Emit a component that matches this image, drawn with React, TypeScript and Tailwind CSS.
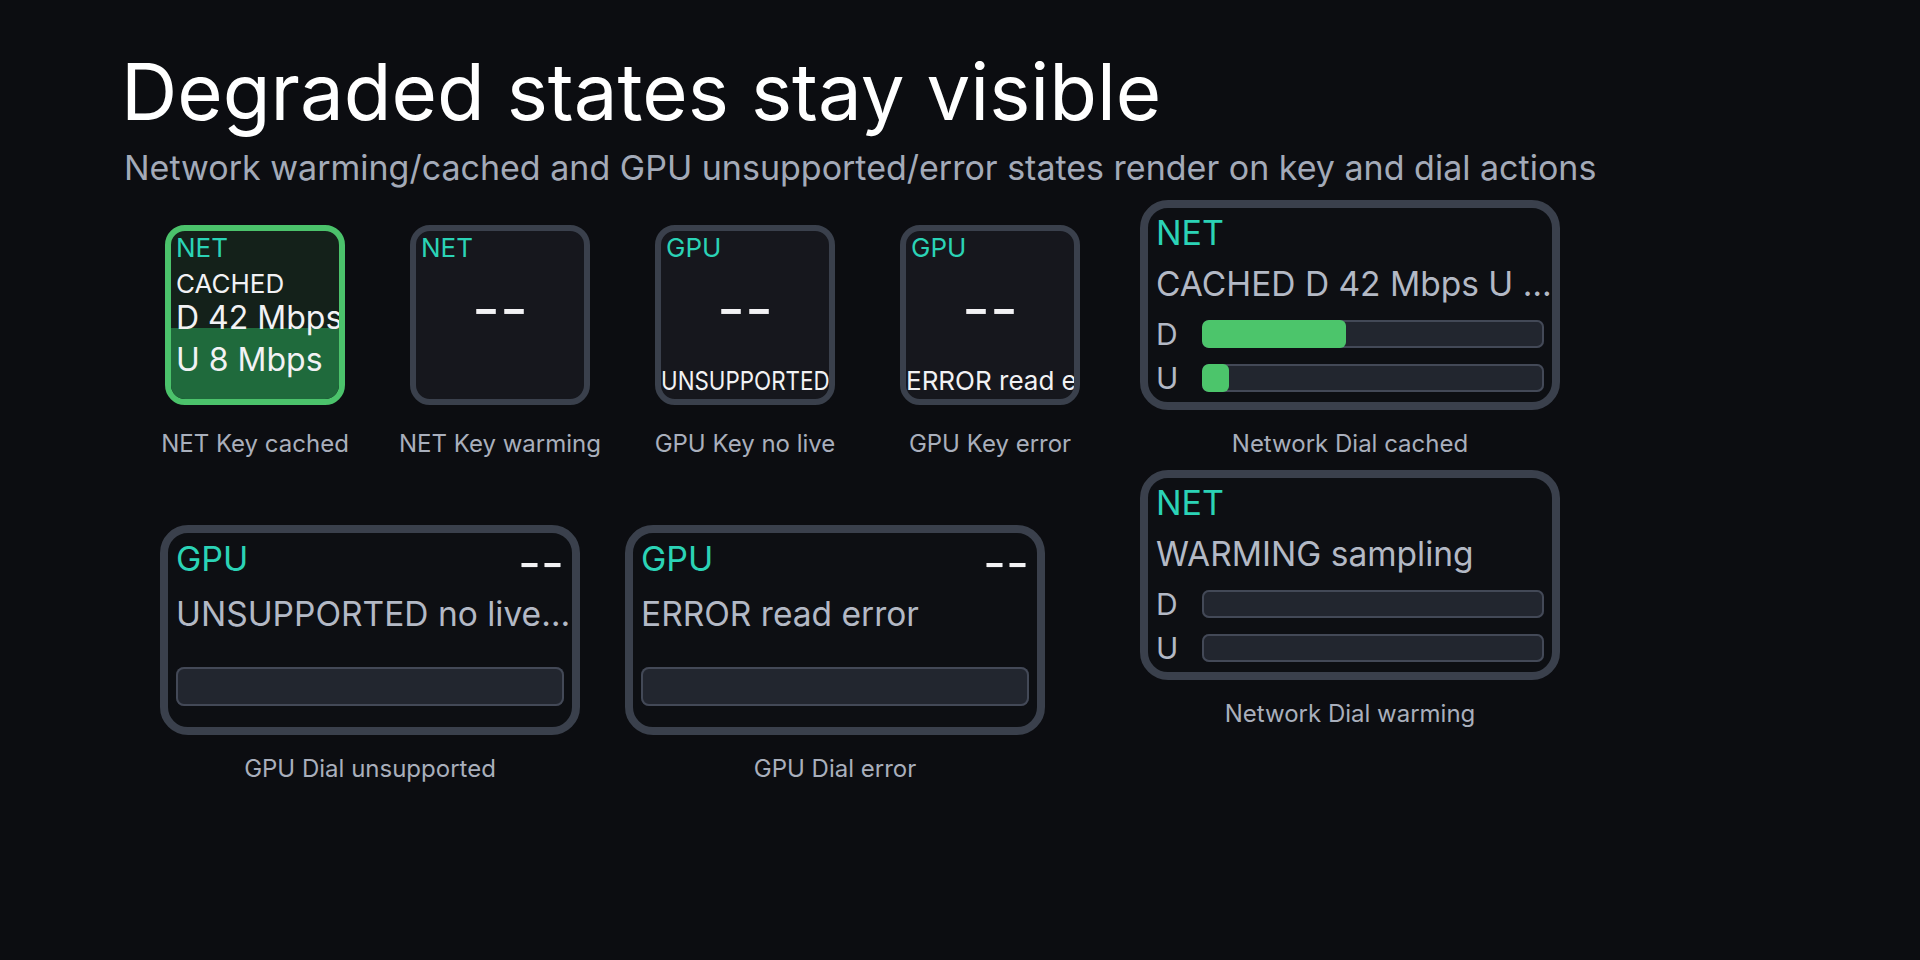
import React from "react";

type Bar = { label: string; pct: number | null };

const TEAL = "text-[#2bd3b6]";

function KeyTile({
  tag,
  active,
  fillPct,
  lines,
  value,
  status,
  squeeze,
}: {
  tag: string;
  active?: boolean;
  fillPct?: number;
  lines?: React.ReactNode;
  value?: string;
  status?: string;
  squeeze?: boolean;
}) {
  return (
    <div
      className={
        active
          ? "relative h-[180px] w-[180px] overflow-hidden rounded-[20px] border-[6px] border-[#4bc26b] bg-[#14211a]"
          : "relative h-[180px] w-[180px] overflow-hidden rounded-[20px] border-[6px] border-[#3a404c] bg-[#16171d]"
      }
    >
      {fillPct !== undefined && (
        <div
          className="absolute inset-x-0 bottom-0 bg-[#1f6a3c]"
          style={{ height: `${fillPct}%` }}
        />
      )}
      <div className="relative flex h-full flex-col pl-[5px]">
        <div className={`pt-[1px] text-[26px] leading-[31px] ${TEAL}`}>{tag}</div>
        {lines}
        {value && (
          <div className="-ml-[5px] mt-[15px] text-center text-[61px] leading-none text-[#f2f2f4]">
            {value}
          </div>
        )}
        {status && (
          <div className="-ml-[5px] mt-auto overflow-hidden whitespace-nowrap pb-[3px] text-[26px] leading-[31px] text-[#f2f2f4]">
            <span className={squeeze ? "inline-block origin-left scale-x-[0.86]" : "inline-block"}>
              {status}
            </span>
          </div>
        )}
      </div>
    </div>
  );
}

function Meter({ pct, tall }: { pct: number | null; tall?: boolean }) {
  return (
    <div
      className={
        tall
          ? "h-[39px] w-full overflow-hidden rounded-[8px] bg-[#22262f] shadow-[inset_0_0_0_2px_#434957]"
          : "h-[28px] flex-1 overflow-hidden rounded-[7px] bg-[#22262f] shadow-[inset_0_0_0_2px_#434957]"
      }
    >
      {pct !== null && (
        <div className="h-full rounded-[6px] bg-[#4cc56b]" style={{ width: `${pct}%` }} />
      )}
    </div>
  );
}

function NetDial({ status, bars }: { status: string; bars: Bar[] }) {
  return (
    <div className="h-[210px] w-[420px] overflow-hidden rounded-[28px] border-[8px] border-[#3a404c] bg-[#0d0f13] px-2">
      <div className={`pt-[4px] text-[34px] leading-[41px] ${TEAL}`}>NET</div>
      <div className="-mr-2 mt-[11px] truncate text-[33.5px] leading-[41px] text-[#b3b9c5]">
        {status}
      </div>
      {bars.map((b, i) => (
        <div
          key={b.label}
          className={`flex h-[28px] items-center gap-2 ${i === 0 ? "mt-[15px]" : "mt-[16px]"}`}
        >
          <span className="w-[38px] text-[30px] leading-[28px] text-[#b3b9c5]">{b.label}</span>
          <Meter pct={b.pct} />
        </div>
      ))}
    </div>
  );
}

function GpuDial({ status }: { status: string }) {
  return (
    <div className="h-[210px] w-[420px] overflow-hidden rounded-[28px] border-[8px] border-[#3a404c] bg-[#0d0f13] px-2">
      <div className="flex h-[41px] items-start justify-between pt-[5px]">
        <span className={`text-[34px] leading-[41px] ${TEAL}`}>GPU</span>
        <span className="text-[50px] leading-none text-[#f2f2f4]">--</span>
      </div>
      <div className="-mr-2 mt-[20px] truncate text-[33.5px] leading-[41px] text-[#b3b9c5]">
        {status}
      </div>
      <div className="mt-[32px]">
        <Meter pct={null} tall />
      </div>
    </div>
  );
}

function Caption({ children, gap }: { children: React.ReactNode; gap: string }) {
  return (
    <div className={`${gap} whitespace-nowrap text-[24px] leading-[29px] text-[#a9afbc]`}>
      {children}
    </div>
  );
}

export default function App() {
  const keys = [
    {
      caption: "NET Key cached",
      el: (
        <KeyTile
          tag="NET"
          active
          fillPct={42}
          lines={
            <>
              <div className="mt-[5px] text-[26px] leading-[31px] text-[#f2f2f4]">CACHED</div>
              <div className="mt-[1px] whitespace-nowrap text-[32px] leading-[36px] text-[#f2f2f4]">
                D 42 Mbps
              </div>
              <div className="mt-[6px] whitespace-nowrap text-[32px] leading-[36px] text-[#f2f2f4]">
                U 8 Mbps
              </div>
            </>
          }
        />
      ),
    },
    { caption: "NET Key warming", el: <KeyTile tag="NET" value="--" /> },
    {
      caption: "GPU Key no live",
      el: <KeyTile tag="GPU" value="--" status="UNSUPPORTED" squeeze />,
    },
    { caption: "GPU Key error", el: <KeyTile tag="GPU" value="--" status="ERROR read error" /> },
  ];

  return (
    <div className="min-h-screen w-full bg-[#0c0d11] pl-[121px] pt-[45px] font-[family-name:Inter,sans-serif]">
      <h1 className="text-[78px] font-normal leading-[94px] text-white">Degraded states stay visible</h1>
      <p className="mt-[8px] pl-[3px] text-[34px] leading-[41px] text-[#a3aab8]">
        Network warming/cached and GPU unsupported/error states render on key and dial actions
      </p>

      <div className="mt-[12px] flex items-start">
        <div className="ml-[39px] flex flex-col pt-[25px]">
          <div className="flex gap-[65px] pl-[5px]">
            {keys.map((k) => (
              <div key={k.caption} className="flex w-[180px] flex-col items-center">
                {k.el}
                <Caption gap="mt-[24px]">{k.caption}</Caption>
              </div>
            ))}
          </div>
          <div className="mt-[67px] flex gap-[45px]">
            <div className="flex flex-col items-center">
              <GpuDial status="UNSUPPORTED no live GPU metrics" />
              <Caption gap="mt-[19px]">GPU Dial unsupported</Caption>
            </div>
            <div className="flex flex-col items-center">
              <GpuDial status="ERROR read error" />
              <Caption gap="mt-[19px]">GPU Dial error</Caption>
            </div>
          </div>
        </div>

        <div className="ml-[60px] flex flex-col">
          <div className="flex flex-col items-center">
            <NetDial
              status="CACHED D 42 Mbps U 8 Mbps"
              bars={[
                { label: "D", pct: 42 },
                { label: "U", pct: 8 },
              ]}
            />
            <Caption gap="mt-[19px]">Network Dial cached</Caption>
          </div>
          <div className="mt-[12px] flex flex-col items-center">
            <NetDial
              status="WARMING sampling"
              bars={[
                { label: "D", pct: null },
                { label: "U", pct: null },
              ]}
            />
            <Caption gap="mt-[19px]">Network Dial warming</Caption>
          </div>
        </div>
      </div>
    </div>
  );
}
